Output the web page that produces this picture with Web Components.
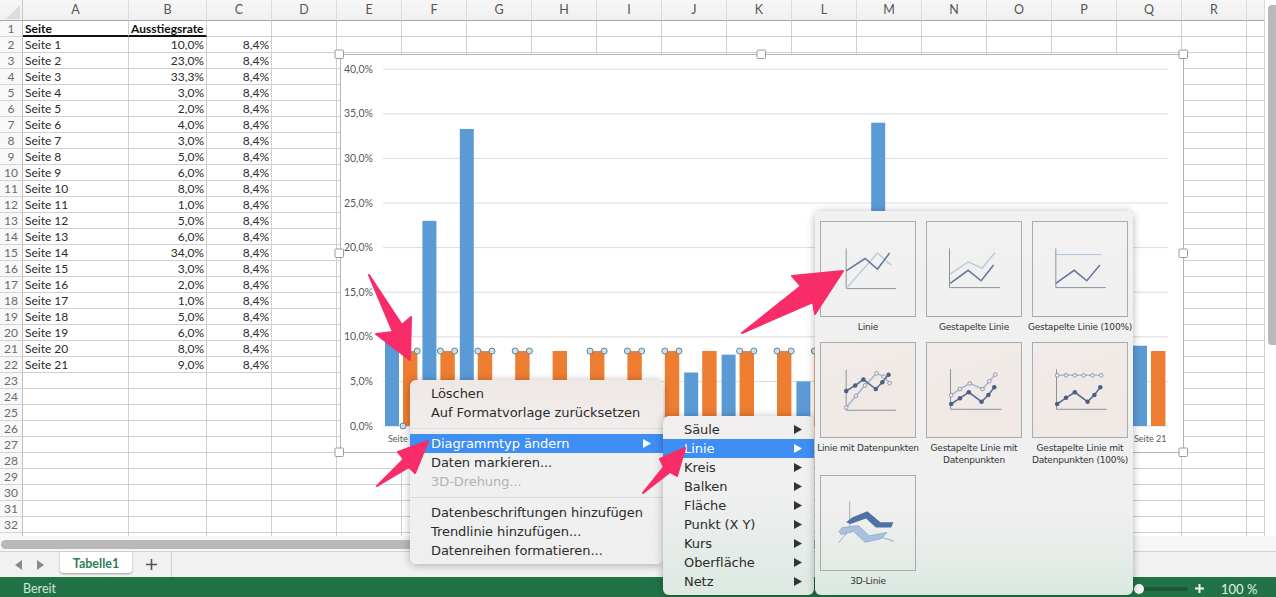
<!DOCTYPE html>
<html lang="de">
<head>
<meta charset="utf-8">
<title>Tabelle1</title>
<style>
  html, body { margin: 0; padding: 0; overflow: hidden; background: #fff; }
</style>
</head>
<body>
<excel-app>
  <sheet-area></sheet-area>
  <sheet-tabs></sheet-tabs>
  <status-line></status-line>

  <bar-chart></bar-chart>

  <pop-menu style="left:410px;top:380px;width:253px;--menu-top:#efe8e5;--menu-bottom:#efefef">
    <menu-row>Löschen</menu-row>
    <menu-row>Auf Formatvorlage zurücksetzen</menu-row>
    <menu-gap></menu-gap>
    <menu-row active more>Diagrammtyp ändern</menu-row>
    <menu-row>Daten markieren...</menu-row>
    <menu-row disabled>3D-Drehung...</menu-row>
    <menu-gap></menu-gap>
    <menu-row>Datenbeschriftungen hinzufügen</menu-row>
    <menu-row>Trendlinie hinzufügen...</menu-row>
    <menu-row>Datenreihen formatieren...</menu-row>
  </pop-menu>

  <pop-menu style="left:663px;top:416px;width:151px;--menu-top:#f0eeee;--menu-bottom:#dde9e3;--indent:21px">
    <menu-row more>Säule</menu-row>
    <menu-row active more>Linie</menu-row>
    <menu-row more>Kreis</menu-row>
    <menu-row more>Balken</menu-row>
    <menu-row more>Fläche</menu-row>
    <menu-row more>Punkt (X Y)</menu-row>
    <menu-row more>Kurs</menu-row>
    <menu-row more>Oberfläche</menu-row>
    <menu-row more>Netz</menu-row>
  </pop-menu>

  <type-panel>
    <type-thumb>
      <svg viewBox="0 0 96 96" width="94" height="94" fill="none" stroke-width="1.6">
        <path d="M25.7 27V68H76.7" stroke="#8b8f99" stroke-width="1"/>
        <path d="M25.7 68L57.7 31.7L71.7 44" stroke="#bccde0"/>
        <path d="M25.7 50L45 37.3L57.7 48L70 31.7" stroke="#64799c"/>
      </svg>
      <span slot="label">Linie</span>
    </type-thumb>
    <type-thumb>
      <svg viewBox="0 0 96 96" width="94" height="94" fill="none" stroke-width="1.6">
        <path d="M23 27V67H74.7" stroke="#8b8f99" stroke-width="1"/>
        <path d="M23.7 53.3L42 40.7L56.3 47.3L69.3 31.3" stroke="#bccde0"/>
        <path d="M23.7 62.7L42 49.3L55.3 60L68 44" stroke="#64799c"/>
      </svg>
      <span slot="label">Gestapelte Linie</span>
    </type-thumb>
    <type-thumb>
      <svg viewBox="0 0 96 96" width="94" height="94" fill="none" stroke-width="1.6">
        <path d="M23.3 27V67H74.3" stroke="#8b8f99" stroke-width="1"/>
        <path d="M23.3 33.3H70" stroke="#a9bdd6" stroke-width="1"/>
        <path d="M23.3 62.7L42 49.3L55 60L68.3 44" stroke="#64799c"/>
      </svg>
      <span slot="label">Gestapelte Linie (100%)</span>
    </type-thumb>

    <type-thumb tinted>
      <svg viewBox="0 0 96 96" width="94" height="94" data-dots>
        <path d="M25.7 27.3V68.7H76.7" fill="none" stroke="#8b8f99"/>
        <g data-line="25.7,66 35.7,54 45,43.3 56.7,31 64,34.3 70,41" data-kind="light"></g>
        <g data-line="25.7,49 35,43.3 43.3,37.3 56,47 62.7,40 69,32.3" data-kind="dark"></g>
      </svg>
      <span slot="label">Linie mit Datenpunkten</span>
    </type-thumb>
    <type-thumb tinted>
      <svg viewBox="0 0 96 96" width="94" height="94" data-dots>
        <path d="M24 26.7V67.7H76.3" fill="none" stroke="#8b8f99"/>
        <g data-line="24.7,53.3 33.7,47 43.7,41.3 56.7,47 63.7,39 69.7,32.3" data-kind="light"></g>
        <g data-line="24.7,62.3 33.7,56.3 42.7,50.3 55.7,60 62.7,53 68.7,45.3" data-kind="dark"></g>
      </svg>
      <span slot="label">Gestapelte Linie mit<br>Datenpunkten</span>
    </type-thumb>
    <type-thumb tinted>
      <svg viewBox="0 0 96 96" width="94" height="94" data-dots>
        <path d="M24 26.7V67.7H75.3" fill="none" stroke="#8b8f99"/>
        <g data-line="24.7,33 33.7,33 42.7,33 51.7,33 60.7,33 69.7,33" data-kind="light"></g>
        <g data-line="24.7,62.3 33.7,56 42.7,50.3 55.7,60 62.7,53 68.7,45.3" data-kind="dark"></g>
      </svg>
      <span slot="label">Gestapelte Linie mit<br>Datenpunkten (100%)</span>
    </type-thumb>

    <type-thumb>
      <svg viewBox="0 0 96 96" width="94" height="94" fill="none">
        <path d="M29.3 25.7V52M18 68L29.3 55M60 62L74.3 66.5" stroke="#a6a8ad"/>
        <path d="M25.7 47.3L31.7 42.3L47.3 36L60.7 47.3H74L71.7 52.7H56L46 43.3L30 49Z" fill="#4f72a6"/>
        <path d="M18.3 56.7L21.7 52.7L38.3 50.7L49.3 61L67.3 57.7L61.7 64L45 67.7L33.3 56.7L20.7 60Z" fill="#a9c0de" stroke="#7f9ac0" stroke-width=".6"/>
      </svg>
      <span slot="label">3D-Linie</span>
    </type-thumb>
  </type-panel>

  <pink-arrow points="369,275 402,325 411,317 410,360 376,334 393,332"></pink-arrow>
  <pink-arrow points="377,486 404,459 398,452 428,441 415,473 409,467"></pink-arrow>
  <pink-arrow points="643,493 664,467 660,459 685,448 677,476 670,472"></pink-arrow>
  <pink-arrow points="742,333 801,286 792,276 843,271 815,314 813,302"></pink-arrow>
</excel-app>

<script>
const COLS = ['A','B','C','D','E','F','G','H','I','J','K','L','M','N','O','P','Q','R','']
const RATES = [10,23,33.3,3,2,4,3,5,6,8,1,5,6,34,3,2,1,5,6,8,9]
const pct = v => v.toFixed(1).replace('.', ',') + '%'

customElements.define('excel-app', class extends HTMLElement {
  constructor() {
    super()
    this.attachShadow({ mode: 'open' }).innerHTML = `
      <style>
        :host { display: flex; flex-direction: column; position: relative; width: 1276px; height: 597px; overflow: hidden;
                font-family: "Lato", "Liberation Sans", sans-serif; color: #222; }
      </style>
      <slot></slot>`
  }
})

// the worksheet with both scrollbars
customElements.define('sheet-area', class extends HTMLElement {
  constructor() {
    super()
    const head = `<div class="corner"><i></i></div>` + COLS.map(c => `<div class="head">${c}</div>`).join('')
    let rows = ''
    for (let r = 1; r <= 33; r++) {
      let a = '', b = '', c = '', ca = 'cell', cb = 'cell num', cc = 'cell num'
      if (r === 1) { a = 'Seite'; b = 'Ausstiegsrate'; ca = 'cell bold under'; cb = 'cell bold under' }
      if (r >= 2 && r <= 22) { a = 'Seite ' + (r - 1); b = pct(RATES[r - 2]); c = '8,4%' }
      // row 33 is only a sliver at the bottom edge, its number does not show
      rows += `<div class="rowno">${r < 33 ? r : ''}</div><div class="${ca}">${a}</div><div class="${cb}">${b}</div><div class="${cc}">${c}</div>`
      rows += '<div class="cell"></div>'.repeat(COLS.length - 3)
    }
    this.attachShadow({ mode: 'open' }).innerHTML = `
      <style>
        :host { display: block; height: 551px; font-size: 12px; }
        .top { display: flex; height: 536px; }
        .grid { flex: 0 0 1265px; height: 536px; overflow: hidden; display: grid; align-content: start;
                grid-template-columns: 23px 106px 78px repeat(16, 65px) 18px;
                grid-template-rows: 21px; grid-auto-rows: 16px; }
        .grid > div { box-sizing: border-box; white-space: nowrap; overflow: hidden; }
        .corner, .head { background: linear-gradient(#f7f7f7, #f0f0f0); border-bottom: 1px solid #a8a8a8; border-right: 1px solid #dcdcdc; }
        .corner { position: relative; border-right-color: #c8c8c8; }
        .corner i { display: block; width: 0; height: 0; margin: 5px 0 0 6px; border-style: solid; border-width: 0 0 14px 14px; border-color: transparent transparent #dcdcdc transparent; }
        .head { text-align: center; line-height: 20px; color: #555; font-size: 12.5px; }
        .rowno { background: #f8f8f8; border-right: 1px solid #c0c0c0; border-bottom: 1px solid #d4d4d4; text-align: center; line-height: 15px; color: #6a6a6a; }
        .cell { border-right: 1px solid #cfcfcf; border-bottom: 1px solid #cfcfcf; line-height: 16px; padding: 0 2px; color: #2a2a2a; }
        .num { text-align: right; }
        .bold { font-weight: 700; color: #111; }
        .under { border-bottom: 2px solid #111; line-height: 15px; }
        .vbar { flex: 1; background: #fff; padding: 5px 0 0 3px; }
        .vbar i { display: block; height: 340px; background: #b9b9b9; border-radius: 4px 0 0 4px; }
        .hbar { height: 15px; box-sizing: border-box; padding: 4px 0 0 1px; background: #f7f7f7; }
        .hbar i { display: block; width: 1125px; height: 9px; background: #b9b9b9; border-radius: 5px; }
      </style>
      <div class="top">
        <div class="grid">${head}${rows}</div>
        <div class="vbar"><i></i></div>
      </div>
      <div class="hbar"><i></i></div>`
  }
})

customElements.define('sheet-tabs', class extends HTMLElement {
  constructor() {
    super()
    this.attachShadow({ mode: 'open' }).innerHTML = `
      <style>
        :host { display: flex; align-items: flex-start; height: 26px; box-sizing: border-box; background: #f1f1f1; border-top: 1px solid #d2d2d2; }
        .nav { display: flex; gap: 15px; padding: 8px 0 0 15px; width: 45px; }
        .nav svg { display: block; }
        .tab { width: 72px; height: 21px; background: #fff; border-radius: 0 0 3px 3px; box-shadow: 0 1px 2px rgba(0,0,0,.35);
               text-align: center; line-height: 23px; font-size: 12.5px; font-weight: 700; color: #2f7d58; }
        .add { width: 39px; height: 25px; display: flex; align-items: center; justify-content: center; border-right: 1px solid #d2d2d2; }
      </style>
      <div class="nav">
        <svg width="7" height="10"><path d="M7 0V10L0 5Z" fill="#8a8a8a"/></svg>
        <svg width="7" height="10"><path d="M0 0V10L7 5Z" fill="#8a8a8a"/></svg>
      </div>
      <div class="tab">Tabelle1</div>
      <div class="add"><svg width="11" height="11"><path d="M5.5 0V11M0 5.5H11" stroke="#555" stroke-width="1.6"/></svg></div>`
  }
})

customElements.define('status-line', class extends HTMLElement {
  constructor() {
    super()
    this.attachShadow({ mode: 'open' }).innerHTML = `
      <style>
        :host { display: flex; align-items: center; height: 20px; background: #217346; color: #d3e8dc; font-size: 12.5px; padding: 3px 0 0 23px; box-sizing: border-box; }
        .zoom { margin-left: auto; display: flex; align-items: center; width: 142px; color: #e4f0e9; }
        .track { position: relative; width: 54px; height: 4px; border-radius: 2px; background: #1a5836; }
        .track i { position: absolute; left: 0; top: -3px; width: 10px; height: 10px; border-radius: 50%; background: #f4f4f4; }
        svg { margin: 0 0 0 7px; }
        .val { margin-left: 17px; font-size: 13px; }
      </style>
      <span>Bereit</span>
      <div class="zoom">
        <div class="track"><i></i></div>
        <svg width="9" height="9"><path d="M4.5 0V9M0 4.5H9" stroke="#f2f2f2" stroke-width="2"/></svg>
        <span class="val">100 %</span>
      </div>`
  }
})

// floats over the sheet, svg coordinates are page coordinates
customElements.define('bar-chart', class extends HTMLElement {
  constructor() {
    super()
    let svg = ''
    for (let i = 0; i <= 8; i++) {
      const y = 426 - i * 44.6
      svg += `<line x1="383" x2="1168" y1="${y}" y2="${y}" stroke="#dcdcdc"/>`
      svg += `<text x="373" y="${y + 3.5}" text-anchor="end">${pct(i * 5)}</text>`
    }
    const step = 37.4
    RATES.forEach((v, i) => {
      const x = 385 + i * step
      const h = v * 8.92
      svg += `<rect x="${x}" y="${426 - h}" width="14" height="${h}" fill="#5b9bd5"/>`
      svg += `<rect x="${x + 18}" y="351" width="14.4" height="75" fill="#ed7d31"/>`
    })
    // selection markers of the orange series
    const marks = [0, 1, 2, 3, 5, 6, 7, 9, 10, 11]
    marks.forEach(i => {
      const x = 403 + i * step
      if (i > 0) svg += `<circle cx="${x}" cy="351" r="3"/>`
      if (i < 11) svg += `<circle cx="${x + 14.2}" cy="351" r="3"/>`
    })
    svg += `<circle cx="403" cy="426" r="3"/>`
    svg += `<text x="388" y="442" class="cat">Seite</text>`
    svg += `<text x="1134" y="442" class="cat">Seite 21</text>`
    const handles = [[339,54],[761,54],[1183,54],[339,253],[1183,253],[339,452],[761,452],[1183,452]]
      .map(([x, y]) => `<rect class="handle" x="${x - 4}" y="${y - 4}" width="8.5" height="8.5" rx="1"/>`).join('')
    this.attachShadow({ mode: 'open' }).innerHTML = `
      <style>
        :host { position: absolute; left: 334px; top: 48px; width: 856px; height: 410px; }
        svg { display: block; overflow: visible; }
        text { font: 10.5px "Lato", "Liberation Sans", sans-serif; fill: #595959; }
        .cat { font-size: 9px; }
        circle { fill: #cfe0e8; stroke: #5d8496; stroke-width: 1; }
        .frame { fill: #fff; stroke: #b4b4b4; }
        .handle { fill: #fff; stroke: #9c9c9c; }
      </style>
      <svg width="856" height="410" viewBox="334 48 856 410">
        <rect class="frame" x="340.5" y="54.5" width="843" height="398"/>
        ${svg}${handles}
      </svg>`
  }
})

customElements.define('pop-menu', class extends HTMLElement {
  constructor() {
    super()
    this.attachShadow({ mode: 'open' }).innerHTML = `
      <style>
        :host { position: absolute; display: block; box-sizing: border-box; padding: 4px 0; border-radius: 6px;
                background: linear-gradient(var(--menu-top, #efefef), #f0f0f0 40%, var(--menu-bottom, #efefef));
                box-shadow: 0 1px 8px rgba(0,0,0,.3);
                font: 13px "DejaVu Sans", "Liberation Sans", sans-serif; letter-spacing: -.06px; color: #2b2b2b; }
      </style>
      <slot></slot>`
  }
})

customElements.define('menu-row', class extends HTMLElement {
  constructor() {
    super()
    const more = this.hasAttribute('more')
    this.attachShadow({ mode: 'open' }).innerHTML = `
      <style>
        :host { display: flex; align-items: center; height: 19px; padding: 0 12px 0 var(--indent, 21px); white-space: nowrap; }
        :host([active]) { background: #3e8ef3; color: #fff; }
        :host([disabled]) { color: #b3b3b3; }
        svg { margin-left: auto; fill: #333; }
        :host([active]) svg { fill: #fff; }
      </style>
      <slot></slot>
      ${more ? '<svg width="8" height="9"><path d="M0 0L8 4.5L0 9Z"/></svg>' : ''}`
  }
})

customElements.define('menu-gap', class extends HTMLElement {
  constructor() {
    super()
    this.attachShadow({ mode: 'open' }).innerHTML = `
      <style>
        :host { display: flex; align-items: center; height: 12px; }
        i { flex: 1; height: 1px; background: #dcdcdc; }
      </style>
      <i></i>`
  }
})

customElements.define('type-panel', class extends HTMLElement {
  constructor() {
    super()
    this.attachShadow({ mode: 'open' }).innerHTML = `
      <style>
        :host { position: absolute; left: 815px; top: 211px; width: 318px; height: 384px; box-sizing: border-box; border-radius: 6px;
                padding: 10px 5px 0; display: grid; grid-template-columns: repeat(3, 96px); column-gap: 10px;
                grid-template-rows: 121px 133px auto;
                background: linear-gradient(#f1f1f1, #efefef 78%, #e6ece8 90%, #d9e8e0);
                box-shadow: 0 1px 8px rgba(0,0,0,.3); }
      </style>
      <slot></slot>`
  }
})

customElements.define('type-thumb', class extends HTMLElement {
  constructor() {
    super()
    this.attachShadow({ mode: 'open' }).innerHTML = `
      <style>
        :host { display: block; width: 96px; }
        .box { box-sizing: border-box; width: 96px; height: 96px; border: 1px solid #ababab; }
        :host([tinted]) .box { background: linear-gradient(160deg, #f1ebe9, #efe8e4); }
        .label { width: 110px; margin: 4px 0 0 -7px; text-align: center; font: 9px/12px "DejaVu Sans", "Liberation Sans", sans-serif; letter-spacing: -.2px; color: #333; white-space: nowrap; }
        ::slotted(svg) { display: block; }
      </style>
      <div class="box"><slot></slot></div>
      <div class="label"><slot name="label"></slot></div>`
  }
})

customElements.define('pink-arrow', class extends HTMLElement {
  constructor() {
    super()
    this.attachShadow({ mode: 'open' }).innerHTML = `
      <style>
        :host { position: absolute; left: 0; top: 0; width: 1276px; height: 597px; pointer-events: none; }
        polygon { fill: #f72c68; stroke: #f72c68; stroke-width: 2; stroke-linejoin: round; }
      </style>
      <svg width="1276" height="597"><polygon points="${this.getAttribute('points')}"/></svg>`
  }
})

// dotted lines in the thumbnails
document.querySelectorAll('svg[data-dots] g[data-line]').forEach(g => {
  const dark = g.dataset.kind === 'dark'
  const pts = g.dataset.line
  const line = dark ? '#5a6e92' : '#a9bbd2'
  let out = `<polyline points="${pts}" fill="none" stroke="${line}" stroke-width="1.6"/>`
  pts.split(' ').forEach(p => {
    const [x, y] = p.split(',')
    out += dark
      ? `<circle cx="${x}" cy="${y}" r="2.3" fill="#4d5f84"/>`
      : `<circle cx="${x}" cy="${y}" r="1.9" fill="#f0eaea" stroke="#7f8699" stroke-width=".8"/>`
  })
  g.innerHTML = out
})
</script>
</body>
</html>
